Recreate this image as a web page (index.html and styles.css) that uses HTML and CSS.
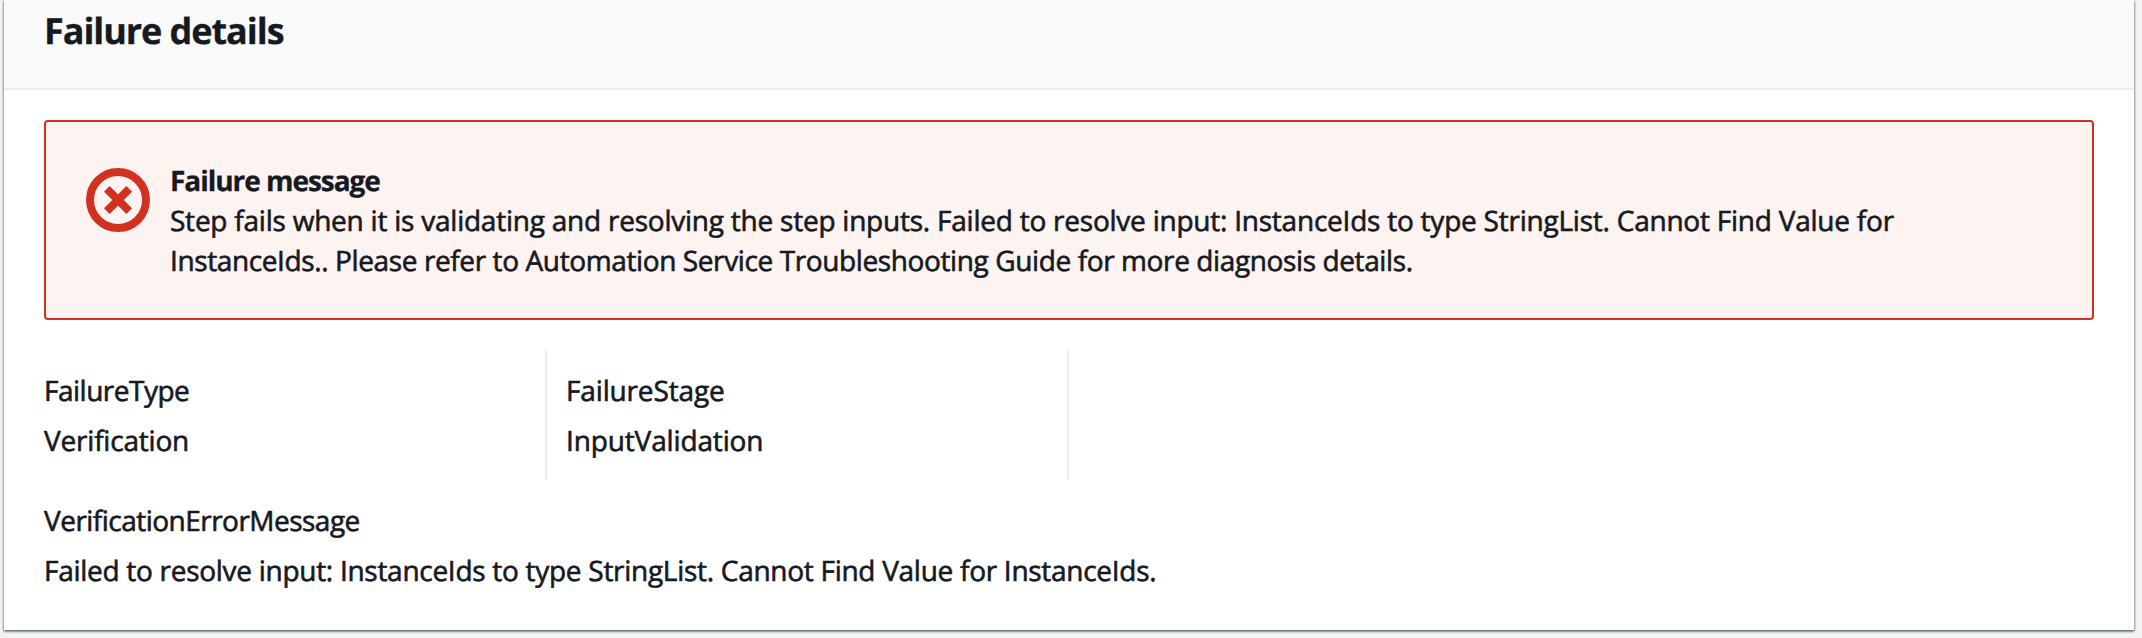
FILE: index.html
```html
<!DOCTYPE html>
<html lang="en">
<head>
<meta charset="utf-8">
<title>Failure details</title>
<link rel="stylesheet" href="styles.css">
</head>
<body>
<section class="card">
  <header class="card-header"><h2 class="card-title">Failure details</h2></header>
  <div class="card-body">
    <div class="alert">
      <svg class="alert-icon" viewBox="0 0 16 16" fill="none" stroke="currentColor" stroke-width="2">
        <circle cx="8" cy="8" r="7"/>
        <path d="M10.8 5.2 5.2 10.8M5.2 5.2l5.6 5.6"/>
      </svg>
      <div class="alert-text">
        <div class="alert-title">Failure message</div>
        <div class="line-one">Step fails when it is validating and resolving the step inputs. Failed to resolve input: InstanceIds to type StringList. Cannot Find Value for</div>
        <div class="line-two">InstanceIds.. Please refer to Automation Service Troubleshooting Guide for more diagnosis details.</div>
      </div>
    </div>
    <div class="columns">
      <div class="column">
        <div class="type-label">FailureType</div>
        <div class="type-value">Verification</div>
      </div>
      <div class="column">
        <div class="stage-label">FailureStage</div>
        <div class="stage-value">InputValidation</div>
      </div>
    </div>
    <div class="field">
      <div class="error-label">VerificationErrorMessage</div>
      <div class="error-value">Failed to resolve input: InstanceIds to type StringList. Cannot Find Value for InstanceIds.</div>
    </div>
  </div>
</section>
</body>
</html>
```
FILE: styles.css
```css
* { box-sizing: border-box; }
body {
  margin: 0;
  height: 638px;
  padding: 0 8px 8px 4px;
  overflow: hidden;
  background: #f2f3f3;
  color: #16191f;
  font: 28px/40px "Open Sans", "Noto Sans", sans-serif;
  text-rendering: geometricPrecision;
  -webkit-text-stroke: .6px #16191f;
  white-space: nowrap;
}
.card {
  height: 630px;
  background: #fff;
  box-shadow: 0 2px 2px 0 rgba(0, 28, 36, .3), 1px 1px 2px 0 rgba(0, 28, 36, .3), -1px 1px 2px 0 rgba(0, 28, 36, .3);
}
.card-header {
  height: 90px;
  padding: 9px 40px 0;
  background: #fafafa;
  border-bottom: 2px solid #eaeded;
}
.card-title {
  margin: 0;
  font-size: 36px;
  line-height: 44px;
  font-weight: 700;
  letter-spacing: -1.06px;
  -webkit-text-stroke: .3px #16191f;
}
.card-body { padding: 30px 40px 40px; }
.alert {
  display: flex;
  gap: 20px;
  height: 200px;
  padding: 38px 40px;
  border: 2px solid #d13120;
  border-radius: 4px;
  background: #fdf3f1;
}
.alert-icon {
  flex: none;
  width: 64px;
  height: 64px;
  margin-top: 8px;
  color: #d13120;
}
.alert-text { padding-top: 1px; }
.alert-title { font-weight: 700; letter-spacing: -1.04px; -webkit-text-stroke: .3px #16191f; }
.line-one { letter-spacing: -.229px; }
.line-two { letter-spacing: -.386px; }
.columns {
  display: grid;
  grid-template-columns: 503px 522px;
  margin-top: 30px;
}
.column {
  display: grid;
  gap: 10px;
  padding: 21px 0 19px;
  border-right: 2px solid #eaeded;
}
.column + .column { padding-left: 19px; }
.field { display: grid; gap: 10px; margin-top: 21px; }
.type-label { letter-spacing: -.5px; }
.type-value { letter-spacing: -.2px; }
.stage-label { letter-spacing: -.15px; }
.stage-value { letter-spacing: -.14px; }
.error-label { letter-spacing: -.52px; }
.error-value { letter-spacing: -.28px; }
```
